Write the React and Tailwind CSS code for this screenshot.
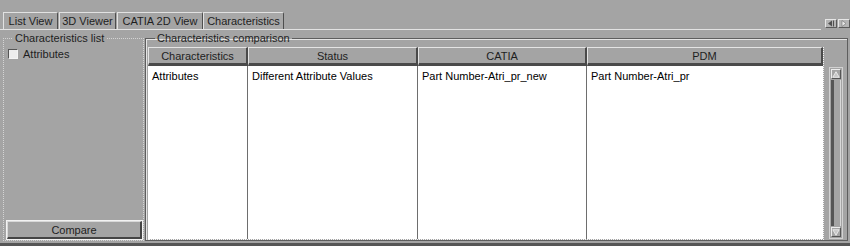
const TABS = [
  { label: "List View", cls: "ml-[3px] w-[55px]" },
  { label: "3D Viewer", cls: "ml-[1px] w-[57px]" },
  { label: "CATIA 2D View", cls: "ml-[1px] w-[86px]" },
  { label: "Characteristics", cls: "ml-[0px] w-[81px]", active: true },
];

const COLUMNS = [
  { title: "Characteristics", value: "Attributes", w: "w-[100px]", sep: true },
  { title: "Status", value: "Different Attribute Values", w: "w-[170px]", sep: true },
  { title: "CATIA", value: "Part Number-Atri_pr_new", w: "w-[169px]", sep: true },
  { title: "PDM", value: "Part Number-Atri_pr", w: "w-[236px]", sep: false },
];

function Tri({ dir }) {
  const pts = {
    up: "5,1 9,8 1,8",
    down: "1,1 9,1 5,8",
  }[dir];
  return (
    <svg width="10" height="9" viewBox="0 0 10 9">
      <polygon points={pts} fill="#c8c8c8" stroke="#f2f2f2" strokeWidth="1" />
    </svg>
  );
}

function ScrollArrow({ dir }) {
  return (
    <div className="w-[12px] h-[9px] flex items-center justify-center bg-[#b4b4b4] border-t border-l border-[#e6e6e6] border-r border-b border-r-[#5a5a5a] border-b-[#5a5a5a]">
      <svg width="8" height="7" viewBox="0 0 8 7">
        {dir === "left" ? (
          <>
            <polygon points="1,3.5 5,0.5 5,6.5" fill="#505050" />
            <rect x="6" y="0.5" width="1" height="6" fill="#505050" />
          </>
        ) : (
          <polygon points="6,3.5 2,0.5 2,6.5" fill="#e8e8e8" stroke="#707070" strokeWidth="0.6" />
        )}
      </svg>
    </div>
  );
}

function Scrollbar() {
  return (
    <div className="ml-[5px] mt-[20px] w-[14px] h-[172px] flex-none flex flex-col bg-[#a4a4a4] border border-[#d2d2d2] px-[1px] py-[1px]">
      <div className="h-[10px] flex items-center justify-center border-t border-l border-[#ececec] border-r border-b border-r-[#555] border-b-[#555]">
        <Tri dir="up" />
      </div>
      <div className="flex-1 my-[1px] flex">
        <div className="w-[3px] bg-[#555]" />
        <div className="flex-1 bg-[#a4a4a4] border-r border-[#d8d8d8]" />
      </div>
      <div className="h-[10px] flex items-center justify-center border-t border-l border-[#ececec] border-r border-b border-r-[#555] border-b-[#555]">
        <Tri dir="down" />
      </div>
    </div>
  );
}

export default function App() {
  return (
    <div className="w-[850px] h-[246px] overflow-hidden bg-[#a4a4a4] flex flex-col text-[11px] leading-[14px] text-[#1e1e1e] font-['Liberation_Sans',Arial,sans-serif]">
      {/* tab strip */}
      <div className="h-[29px] flex items-end flex-none">
        {TABS.map((t) => (
          <div
            key={t.label}
            className={`${t.cls} h-[17px] flex items-center justify-center border-t border-l border-[#e2e2e2] border-r border-r-[#4e4e4e] rounded-tr-[2px] ${
              t.active ? "bg-[#a8a8a8]" : "bg-[#a4a4a4]"
            }`}
          >
            {t.label}
          </div>
        ))}
        <div className="ml-auto mb-[1px] flex gap-[1px]">
          <ScrollArrow dir="left" />
          <ScrollArrow dir="right" />
        </div>
      </div>
      <div className="h-[1px] mr-[29px] bg-[#e2e2e2] flex-none" />

      {/* groups */}
      <div className="flex pt-[1px] flex-none">
        <fieldset className="ml-[3px] w-[141px] h-[210px] flex flex-col border border-dotted border-[#d4d4d4]">
          <legend className="ml-[9px] px-[2px] leading-[14px]">Characteristics list</legend>
          <div className="flex-1 flex flex-col">
            <div className="mt-[2px] ml-[4px] flex items-center gap-[5px]">
              <div className="w-[10px] h-[10px] bg-[#ededed] border-t border-l border-[#555] border-r border-b border-r-[#f4f4f4] border-b-[#f4f4f4]" />
              <span>Attributes</span>
            </div>
            <div className="mt-auto ml-[2px] w-[137px] h-[20px] border border-[#f2f2f2]">
              <div className="h-full flex items-center justify-center border-t border-l border-[#d8d8d8] border-r-2 border-b-2 border-r-[#454545] border-b-[#454545] bg-[#a4a4a4]">
                Compare
              </div>
            </div>
          </div>
        </fieldset>

        <fieldset className="ml-[1px] w-[703px] h-[210px] border border-[#5e5e5e] shadow-[inset_1px_1px_0_#e4e4e4]">
          <legend className="ml-[9px] px-[2px] leading-[14px]">Characteristics comparison</legend>
          <div className="flex pl-[2px] pt-[2px]">
            <div className="w-[676px] flex-none border-r border-b border-dotted border-[#f4f4f4]">
              <div className="flex h-[19px]">
                {COLUMNS.map((c) => (
                  <div
                    key={c.title}
                    className={`${c.w} flex-none flex items-center justify-center bg-[#a4a4a4] border-t border-l border-[#e4e4e4] border-r-2 border-b-[3px] border-r-[#4a4a4a] border-b-[#4a4a4a]`}
                  >
                    {c.title}
                  </div>
                ))}
              </div>
              <div className="flex h-[173px] bg-white text-black">
                {COLUMNS.map((c) => (
                  <div
                    key={c.title}
                    className={`${c.w} flex-none pl-[4px] pt-[3px] ${c.sep ? "border-r border-[#6e6e6e]" : ""}`}
                  >
                    {c.value}
                  </div>
                ))}
              </div>
            </div>
            <Scrollbar />
          </div>
        </fieldset>
      </div>

      <div className="h-[2px] flex-none" />
      <div className="flex-1 bg-[#565656]" />
    </div>
  );
}
